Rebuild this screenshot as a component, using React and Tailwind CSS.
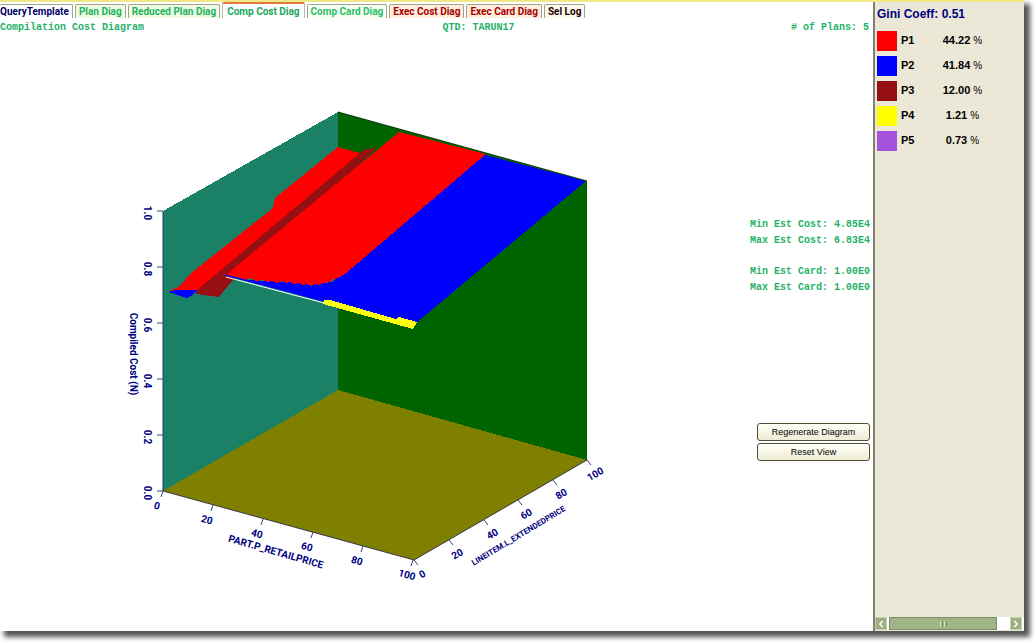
import React from "react";
import { ChevronLeft, ChevronRight } from "lucide-react";

const tabs = [
  { label: "QueryTemplate", color: "text-[#00006c]", bg: "bg-white" },
  { label: "Plan Diag", color: "text-[#22b35c]", bg: "bg-[#effbe4]" },
  { label: "Reduced Plan Diag", color: "text-[#22b35c]", bg: "bg-[#effbe4]" },
  { label: "Comp Cost Diag", color: "text-[#18a75c]", bg: "bg-white", active: true },
  { label: "Comp Card Diag", color: "text-[#2cc068]", bg: "bg-[#f7fff2]" },
  { label: "Exec Cost Diag", color: "text-[#a80000]", bg: "bg-[#ffeedd]" },
  { label: "Exec Card Diag", color: "text-[#a80000]", bg: "bg-[#ffeedd]" },
  { label: "Sel Log", color: "text-[#200000]", bg: "bg-[#fffaf0]" },
];

const plans = [
  { name: "P1", share: "44.22", color: "bg-[#ff0000]" },
  { name: "P2", share: "41.84", color: "bg-[#0000ff]" },
  { name: "P3", share: "12.00", color: "bg-[#960f12]" },
  { name: "P4", share: "1.21", color: "bg-[#ffff00]" },
  { name: "P5", share: "0.73", color: "bg-[#a552dc]" },
];

const costTicks = [
  ["1.0", 211], ["0.8", 267], ["0.6", 323], ["0.4", 379], ["0.2", 435], ["0.0", 491],
];
const partTicks = [
  ["0", 163, 491], ["20", 213, 505], ["40", 263, 519],
  ["60", 313, 532], ["80", 363, 546], ["100", 413, 560],
];
const lineTicks = [
  ["0", 414, 560], ["20", 449, 540], ["40", 484, 520],
  ["60", 518, 500], ["80", 553, 480], ["100", 587, 460],
];

function CostChart() {
  return (
    <svg
      viewBox="120 100 500 490"
      role="img"
      aria-label="Compilation cost surface"
      className="w-[500px] min-w-0 shrink font-[Roboto,'Liberation_Sans',sans-serif] text-[10px] font-bold"
    >
      <g shapeRendering="crispEdges">
        <polygon points="163,211 338,112 338,390 163,491" fill="#1a8066" />
        <polygon points="338,112 587,181 587,460 338,390" fill="#006400" />
        <polygon points="163,491 338,390 587,460 414,560" fill="#808000" />
        <polygon points="195,290 359,153 366,149 377,148 232,281 219,297 196,294" fill="#960f12" />
        <polygon points="338,147 360,153 196,291 168,292 180,286 190,274 273,208 275,198" fill="#ff0000" />
        <polygon points="168,292 176,290 197,290 193,295 187,298" fill="#0000ff" />
        <polygon points="485,155 586,181 416,323 400,321 324,301 226,276 250,280 315,284 332,282" fill="#0000ff" />
        <polygon
          points="399,132 486,154 345,274 338,278 333,279 330,282 323,283 319,285 315,284 311,286 307,284 303,285 299,283 294,284 290,282 286,283 281,281 277,283 272,281 268,282 263,280 256,281 250,278 244,280 238,277 230,277 227,274"
          fill="#ff0000"
        />
        <polygon points="324,300 330,300 396,319 399,317 417,322 413,329 323,304" fill="#ffff10" />
      </g>
      <g fill="none">
        <path d="M226 277 L324 303" stroke="#fff" />
        <path d="M226 275 L323 301" stroke="#0000ff" />
        <path d="M338 112 L587 181" stroke="#123812" />
        <path d="M163 211 V491" stroke="#1a3f80" />
        <path d="M163 491 L414 560 L587 460" stroke="#383850" />
      </g>
      <g stroke="#404070">
        {costTicks.map(([t, y]) => <path key={t} d={`M157 ${y} H163`} />)}
        {partTicks.map(([t, x, y]) => <path key={t} d={`M${x} ${y} l-2 6`} />)}
        {lineTicks.map(([t, x, y]) => <path key={t} d={`M${x} ${y} l4 5`} />)}
      </g>
      <g fill="#000080" textAnchor="middle">
        {costTicks.map(([t, y]) => (
          <text key={t} transform={`translate(144 ${y + 2}) rotate(90)`}>{t}</text>
        ))}
        {partTicks.map(([t, x, y]) => (
          <text key={t} transform={`translate(${x - 7} ${y + 18}) rotate(16)`}>{t}</text>
        ))}
        {lineTicks.map(([t, x, y]) => (
          <text key={t} transform={`translate(${x + 10} ${y + 17}) rotate(-30)`}>{t}</text>
        ))}
        <text transform="translate(130 354) rotate(90)">Compiled Cost (N)</text>
        <text transform="translate(275 555) rotate(16)">PART.P_RETAILPRICE</text>
        <text transform="translate(520 538) rotate(-31)" className="text-[8px]">LINEITEM.L_EXTENDEDPRICE</text>
      </g>
    </svg>
  );
}

function PlanButton({ children }) {
  return (
    <button
      type="button"
      className="h-[18px] w-full rounded-[3px] border border-[#4f5138] bg-linear-to-b from-[#fffff8] to-[#eeecd5] text-[9px] leading-[16px] text-black"
    >
      {children}
    </button>
  );
}

export default function App() {
  return (
    <div className="flex min-h-screen bg-white pr-3 pb-3 font-['Liberation_Sans',Arial,sans-serif]">
      <div className="flex flex-1 flex-col border-t-2 border-[#f0e887] bg-white shadow-[5px_5px_5px_1px_#555]">
        <div className="flex flex-1">
          <main className="flex min-w-0 flex-1 flex-col">
            <div role="tablist" className="flex h-4 items-end gap-[2px] font-[Roboto,'Liberation_Sans',sans-serif]">
              {tabs.map((tab) => (
                <button
                  key={tab.label}
                  type="button"
                  role="tab"
                  aria-selected={!!tab.active}
                  className={`rounded-t-[2px] border-x border-t text-[10px] font-bold whitespace-nowrap first:border-l-0 first:pl-0 ${
                    tab.active
                      ? "h-4 border-x-[#b8b8a8] border-t-2 border-t-[#dd7a3c] px-1 leading-[13px]"
                      : "h-[14px] border-[#a3a38d] px-[3px] leading-[14px]"
                  } ${tab.color} ${tab.bg}`}
                >
                  {tab.label}
                </button>
              ))}
            </div>

            <div className="grid grid-cols-2 pt-1 pr-1 font-['Liberation_Mono',monospace] text-[10px] leading-[12px] font-bold text-[#1fb268]">
              <h1>Compilation Cost Diagram</h1>
              <div className="flex justify-between pl-2">
                <span>QTD: TARUN17</span>
                <span># of Plans: 5</span>
              </div>
            </div>

            <div className="flex flex-1 items-start justify-between pt-[66px] pr-[3px] pl-[120px]">
              <CostChart />
              <div className="flex w-[120px] shrink-0 flex-col pt-[117px]">
                <div className="font-['Liberation_Mono',monospace] text-[10px] leading-[16px] font-bold whitespace-nowrap text-[#1fb268]">
                  <p>Min Est Cost: 4.85E4</p>
                  <p>Max Est Cost: 6.83E4</p>
                  <p className="pt-[15px]">Min Est Card: 1.00E0</p>
                  <p>Max Est Card: 1.00E0</p>
                </div>
                <div className="flex flex-col gap-[2px] pt-[127px] pl-[7px]">
                  <PlanButton>Regenerate Diagram</PlanButton>
                  <PlanButton>Reset View</PlanButton>
                </div>
              </div>
            </div>
          </main>

          <aside className="flex w-[151px] shrink-0 flex-col border-l-2 border-[#83816d] bg-[#ebe8d7]">
            <h2 className="pt-[5px] pl-[2px] text-[12px] leading-[14px] font-bold text-[#000080]">
              Gini Coeff: 0.51
            </h2>
            <table className="mt-[7px] ml-[2px] w-[116px] table-fixed border-collapse text-[11px] text-black">
              <tbody>
                {plans.map((plan) => (
                  <tr key={plan.name} className="h-[25px]">
                    <td className="w-5 p-0">
                      <div className={`size-5 ${plan.color}`} />
                    </td>
                    <th scope="row" className="w-8 p-0 pl-1 text-left font-bold">{plan.name}</th>
                    <td className="p-0 pl-[3px] text-center">
                      <span className="font-bold">{plan.share}</span>{" "}
                      <span className="text-[10px]">%</span>
                    </td>
                  </tr>
                ))}
              </tbody>
            </table>
            <div className="mt-auto mb-[1px] flex h-[13px] bg-white pr-[2px]">
              <button
                type="button"
                aria-label="Scroll left"
                className="flex w-[12px] items-center justify-center border border-[#c4cfad] bg-[#9dae83] text-white"
              >
                <ChevronLeft size={10} strokeWidth={4} className="shrink-0" />
              </button>
              <div className="ml-[2px] flex w-[108px] items-center justify-center gap-[1px] border border-[#7d8d68] bg-[#9fb487]">
                <span className="h-[6px] w-px bg-[#d4dfc2]" />
                <span className="h-[6px] w-px bg-[#7d9267]" />
                <span className="h-[6px] w-px bg-[#d4dfc2]" />
                <span className="h-[6px] w-px bg-[#7d9267]" />
              </div>
              <button
                type="button"
                aria-label="Scroll right"
                className="ml-auto flex w-[12px] items-center justify-center border border-[#c4cfad] bg-[#9dae83] text-white"
              >
                <ChevronRight size={10} strokeWidth={4} className="shrink-0" />
              </button>
            </div>
          </aside>
        </div>
      </div>
    </div>
  );
}
